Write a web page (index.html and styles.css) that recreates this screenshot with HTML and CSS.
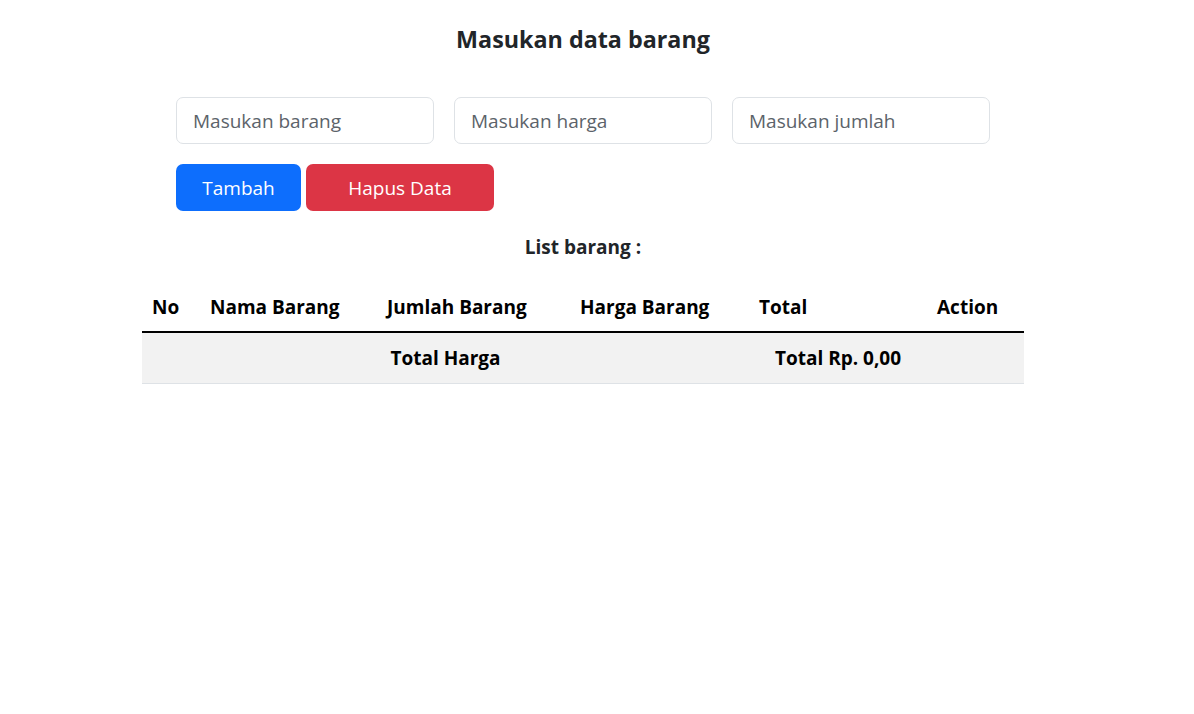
FILE: index.html
```html
<!DOCTYPE html>
<html lang="id">
<head>
<meta charset="utf-8">
<title>Masukan data barang</title>
<link rel="stylesheet" href="styles.css">
</head>
<body>
<div class="page">
  <h4 class="title">Masukan data barang</h4>
  <div class="form">
    <div class="inputs">
      <input class="field" type="text" placeholder="Masukan barang">
      <input class="field" type="text" placeholder="Masukan harga">
      <input class="field" type="text" placeholder="Masukan jumlah">
    </div>
    <div class="actions">
      <button class="btn btn-primary">Tambah</button>
      <button class="btn btn-danger">Hapus Data</button>
    </div>
  </div>
  <h5 class="subtitle">List barang :</h5>
  <table class="table">
    <colgroup>
      <col class="c1"><col class="c2"><col class="c3"><col class="c4"><col class="c5"><col class="c6">
    </colgroup>
    <thead>
      <tr>
        <th>No</th>
        <th>Nama Barang</th>
        <th>Jumlah Barang</th>
        <th>Harga Barang</th>
        <th>Total</th>
        <th>Action</th>
      </tr>
    </thead>
    <tbody>
      <tr class="sum">
        <td colspan="4">Total Harga</td>
        <td>Total Rp. 0,00</td>
        <td></td>
      </tr>
    </tbody>
  </table>
</div>
</body>
</html>
```

FILE: styles.css
```css
* { box-sizing: border-box; }
html, body { margin: 0; padding: 0; background: #fff; }
body {
  font-family: "Open Sans", "Noto Sans", sans-serif;
  color: #212529;
  font-size: 16px;
  line-height: 1.5;
}
.page {
  width: 1166px;
  padding-top: 25px;
}
.title {
  margin: 0;
  text-align: center;
  font-size: 23.3px;
  line-height: 28px;
  font-weight: 700;
}
.form {
  width: 814px;
  margin: 44px auto 0;
}
.inputs {
  display: grid;
  grid-template-columns: repeat(3, 1fr);
  column-gap: 20px;
}
.field {
  display: block;
  width: 100%;
  height: 47px;
  padding: 8px 16px;
  font-family: inherit;
  font-size: 19px;
  color: #212529;
  border: 1px solid #dee2e6;
  border-radius: 7px;
  background: #fff;
  outline: none;
}
.field::placeholder { color: #5c636a; opacity: 1; }
.actions {
  display: flex;
  gap: 5px;
  margin-top: 20px;
}
.btn {
  height: 47px;
  border: none;
  border-radius: 7px;
  color: #fff;
  font-family: inherit;
  font-size: 19px;
  padding: 0 16px;
}
.btn-primary { background: #0d6efd; width: 125px; }
.btn-danger { background: #dc3545; width: 188px; }
.subtitle {
  margin: 24px 0 0;
  text-align: center;
  font-size: 19px;
  line-height: 24px;
  font-weight: 700;
}
.table {
  width: 882px;
  margin: 25px 0 0 142px;
  border-collapse: collapse;
  table-layout: fixed;
  font-size: 19px;
  color: #000;
}
.c1 { width: 58px; }
.c2 { width: 177px; }
.c3 { width: 193px; }
.c4 { width: 179px; }
.c5 { width: 178px; }
.c6 { width: 97px; }
.table th {
  text-align: left;
  font-weight: 700;
  padding: 8px 6px 8px 10px;
  height: 48px;
  border-bottom: 2px solid #000;
  white-space: nowrap;
}
.table td {
  padding: 8px;
  height: 51px;
  font-weight: 700;
  text-align: center;
  background: #f2f2f2;
  border-bottom: 1px solid #dee2e6;
  white-space: nowrap;
}
```
